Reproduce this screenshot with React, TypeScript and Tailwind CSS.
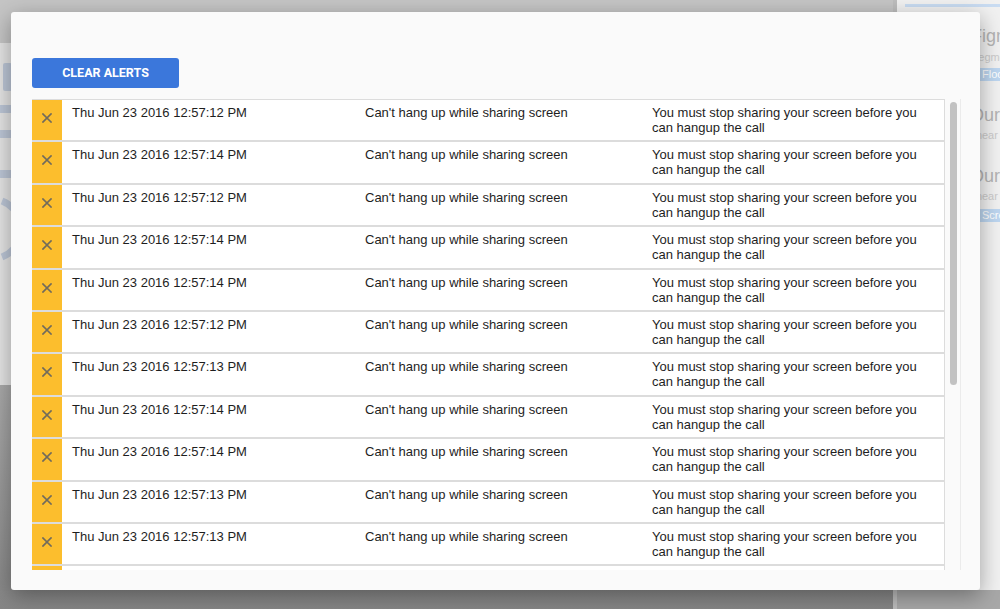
import React from "react";

const times = [
  "12:57:12",
  "12:57:14",
  "12:57:12",
  "12:57:14",
  "12:57:14",
  "12:57:12",
  "12:57:13",
  "12:57:14",
  "12:57:14",
  "12:57:13",
  "12:57:13",
  "12:57:12",
];

const CloseIcon = () => (
  <svg width="10" height="10" viewBox="0 0 10 10">
    <path d="M1 1 L9 9 M9 1 L1 9" stroke="#716b5c" strokeWidth="1.7" strokeLinecap="square" />
  </svg>
);

const AlertRow = ({ time }: { time: string }) => (
  <div className="flex h-[42.4px] shrink-0 border-y border-r border-[#dcdcdc] bg-white text-[13px] leading-[15px] text-[#1e1e1e]">
    <div className="flex w-[30px] shrink-0 justify-center bg-[#fcbe2d] pt-[13px]">
      <CloseIcon />
    </div>
    <div className="w-[292px] shrink-0 pl-[10px] pt-[5px]">Thu Jun 23 2016 {time} PM</div>
    <div className="w-[287px] shrink-0 pl-[11px] pt-[5px]">Can't hang up while sharing screen</div>
    <div className="w-[304px] shrink-0 pl-[11px] pr-[12px] pt-[5px]">
      You must stop sharing your screen before you can hangup the call
    </div>
  </div>
);

const LeftArt = () => (
  <svg width="11" height="342" viewBox="0 0 11 342" className="block">
    <rect x="3" y="20" width="9" height="28" rx="2" fill="#bcc6d6" />
    <rect x="0" y="62" width="11" height="8" fill="#bcc6d6" />
    <rect x="0" y="87" width="11" height="8" fill="#bcc6d6" />
    <rect x="0" y="127" width="11" height="8" fill="#bcc6d6" />
    <path d="M2 158 A 30 30 0 0 1 2 214" stroke="#bcc6d6" strokeWidth="7" fill="none" />
  </svg>
);

export default function App() {
  return (
    <div
      className="relative h-[609px] w-[1000px] overflow-hidden bg-[#868686]"
      style={{ fontFamily: '"Liberation Sans", Arial, sans-serif' }}
    >
      {/* dimmed page behind the dialog */}
      <div className="flex h-full">
        <div className="flex w-[893px] shrink-0 flex-col">
          <div className="h-[43px] bg-[#c5c5c5]" />
          <div className="h-[342px] bg-[#e4e4e4]">
            <LeftArt />
          </div>
          <div className="flex-1 bg-gradient-to-b from-[#a9a9a9] to-[#868686]" />
        </div>
        <div className="flex min-w-0 flex-1 flex-col border-l-[4px] border-[#bdbdbd]">
          <div className="h-[590px] overflow-hidden bg-[#f1f1f1] pl-[8px] pt-[4px]">
            <div className="h-[3px] bg-[#c9dcf2]" />
            <div className="pl-[66px]">
              <div className="whitespace-nowrap pt-[19px] text-[18px] leading-[20px] text-[#b4b4b4]">Figma</div>
              <div className="whitespace-nowrap pt-[4px] text-[11px] leading-[14px] text-[#cbcbcb]">Segments</div>
              <div className="ml-[8px] mt-[4px] w-fit whitespace-nowrap bg-[#bdd6f0] px-[3px] text-[11px] leading-[13px] text-white">Floor</div>
              <div className="whitespace-nowrap pt-[24px] text-[18px] leading-[20px] text-[#b4b4b4]">Duration</div>
              <div className="whitespace-nowrap pt-[3px] text-[11px] leading-[14px] text-[#cbcbcb]">linear</div>
              <div className="whitespace-nowrap pt-[24px] text-[18px] leading-[20px] text-[#b4b4b4]">Duration</div>
              <div className="whitespace-nowrap pt-[3px] text-[11px] leading-[14px] text-[#cbcbcb]">linear</div>
              <div className="ml-[8px] mt-[6px] w-fit whitespace-nowrap bg-[#bdd6f0] px-[3px] text-[11px] leading-[13px] text-white">Screen</div>
            </div>
          </div>
          <div className="flex-1 bg-[#a8a8a8]" />
        </div>
      </div>

      {/* dialog */}
      <div className="absolute left-[11px] top-[12px] flex h-[578px] w-[969px] flex-col rounded-[3px] bg-[#fafafa] pl-[21px] pt-[46px] shadow-[0_6px_22px_rgba(0,0,0,0.35)]">
        <button
          className="h-[30px] w-[147px] rounded-[3px] bg-[#3b77db] text-[12.5px] font-bold text-white"
          style={{ fontFamily: "Roboto, Arial, sans-serif" }}
        >
          CLEAR ALERTS
        </button>
        <div className="mt-[11px] flex h-[471px]">
          <div className="flex w-[913px] flex-col overflow-hidden">
            {times.map((t, i) => (
              <AlertRow key={i} time={t} />
            ))}
          </div>
          <div className="w-[16px] border-r border-[#ebebeb] pl-[5px] pt-[3px]">
            <div className="h-[283px] w-[7px] rounded-full bg-[#c2c2c2]" />
          </div>
        </div>
      </div>
    </div>
  );
}
